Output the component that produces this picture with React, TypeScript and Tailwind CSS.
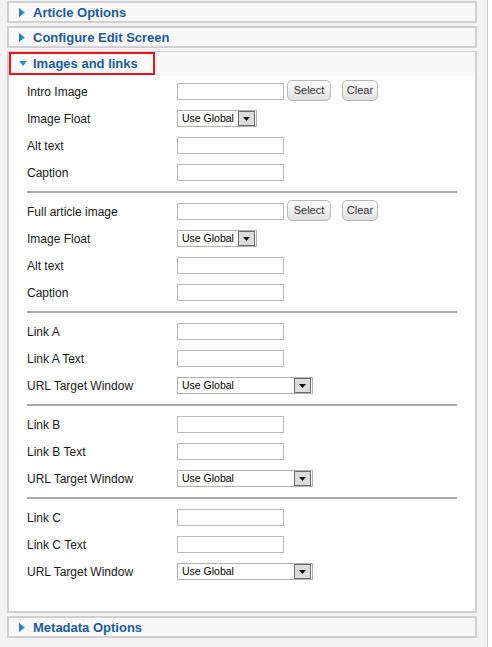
const font = { fontFamily: '"Liberation Sans", Arial, sans-serif' };

const RightArrow = () => (
  <svg width="6" height="9" viewBox="0 0 6 9" className="shrink-0">
    <defs>
      <linearGradient id="ra" x1="0" y1="0" x2="1" y2="0">
        <stop offset="0" stopColor="#1c78b8" />
        <stop offset="1" stopColor="#3aa3e0" />
      </linearGradient>
    </defs>
    <path d="M0 0 L6 4.5 L0 9 Z" fill="url(#ra)" />
  </svg>
);

const DownArrow = () => (
  <svg width="8" height="5" viewBox="0 0 8 5" className="shrink-0">
    <path d="M0 0 L8 0 L4 5 Z" fill="#2a8dcf" />
  </svg>
);

const PanelHeader = ({ title }: { title: string }) => (
  <div className="h-[22px] border-2 border-[#d0d0d0] bg-[#f9f9f9] flex items-center pl-[10px] gap-[8px]">
    <RightArrow />
    <span className="text-[13px] font-bold text-[#1b5c9c] leading-none">{title}</span>
  </div>
);

const TextInput = () => <div className="w-[107px] h-[17px] border border-[#bcbcbc] bg-white" />;

const Button = ({ label, w }: { label: string; w: string }) => (
  <div
    className={`${w} h-[21px] rounded-[5px] border border-[#b8b8b8] bg-gradient-to-b from-white to-[#e0e0e0] flex items-center justify-center text-[11px] text-[#333]`}
  >
    {label}
  </div>
);

const SelectBox = ({ wide }: { wide?: boolean }) => (
  <div
    className={`${wide ? 'w-[136px]' : 'w-[80px]'} h-[17px] border border-[#b0b0b0] bg-white flex items-center justify-between pl-[4px] pr-[1px]`}
  >
    <span className="text-[10.5px] text-black leading-none">Use Global</span>
    <div className="w-[17px] h-[15px] border border-[#6a6a6a] bg-[#dcdcdc] flex items-center justify-center">
      <svg width="7" height="4" viewBox="0 0 7 4">
        <path d="M0 0 L7 0 L3.5 4 Z" fill="#111" />
      </svg>
    </div>
  </div>
);

type Field = 'input' | 'image' | 'select' | 'wideselect';

const Row = ({ label, field }: { label: string; field: Field }) => (
  <div className="h-[27px] flex items-center">
    <div className="w-[150px] text-[12px] text-[#1a1a1a]">{label}</div>
    {field === 'input' && <TextInput />}
    {field === 'select' && <SelectBox />}
    {field === 'wideselect' && <SelectBox wide />}
    {field === 'image' && (
      <div className="flex items-center">
        <TextInput />
        <div className="ml-[3px] -mt-[2px]">
          <Button label="Select" w="w-[44px]" />
        </div>
        <div className="ml-[11px] -mt-[2px]">
          <Button label="Clear" w="w-[36px]" />
        </div>
      </div>
    )}
  </div>
);

const Separator = () => <div className="my-[5px] border-t-2 border-[#a9a9a9]" />;

const groups: { label: string; field: Field }[][] = [
  [
    { label: 'Intro Image', field: 'image' },
    { label: 'Image Float', field: 'select' },
    { label: 'Alt text', field: 'input' },
    { label: 'Caption', field: 'input' },
  ],
  [
    { label: 'Full article image', field: 'image' },
    { label: 'Image Float', field: 'select' },
    { label: 'Alt text', field: 'input' },
    { label: 'Caption', field: 'input' },
  ],
  [
    { label: 'Link A', field: 'input' },
    { label: 'Link A Text', field: 'input' },
    { label: 'URL Target Window', field: 'wideselect' },
  ],
  [
    { label: 'Link B', field: 'input' },
    { label: 'Link B Text', field: 'input' },
    { label: 'URL Target Window', field: 'wideselect' },
  ],
  [
    { label: 'Link C', field: 'input' },
    { label: 'Link C Text', field: 'input' },
    { label: 'URL Target Window', field: 'wideselect' },
  ],
];

export default function App() {
  return (
    <div className="w-[492px] h-[647px] flex bg-white overflow-hidden" style={font}>
      <div className="w-[488px] h-full bg-[#f3f3f3] border-r border-[#cfcfcf] pt-[1px]">
        <div className="ml-[7px] w-[470px] flex flex-col gap-[3px]">
          <PanelHeader title="Article Options" />
          <PanelHeader title="Configure Edit Screen" />

          {/* Images and links, open */}
          <div className="border-2 border-[#d0d0d0] bg-white">
            <div className="h-[24px] bg-[#f9f9f9]">
              <div className="-mt-[1px] w-[146px] h-[23px] border-2 border-[#e8141b] flex items-center pl-[8px] gap-[6px]">
                <DownArrow />
                <span className="text-[13px] font-bold text-[#1b5c9c] leading-none">Images and links</span>
              </div>
            </div>
            <div className="px-[18px] pt-[2px] pb-[26px]">
              {groups.map((g, i) => (
                <div key={i}>
                  {i > 0 && <Separator />}
                  {g.map((r) => (
                    <Row key={r.label} label={r.label} field={r.field} />
                  ))}
                </div>
              ))}
            </div>
          </div>

          <PanelHeader title="Metadata Options" />
        </div>
      </div>
    </div>
  );
}
